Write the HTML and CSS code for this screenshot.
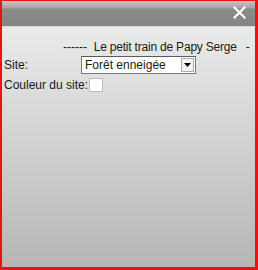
FILE: index.html
```html
<!DOCTYPE html>
<html>
<head>
<meta charset="utf-8">
<link rel="stylesheet" href="styles.css">
</head>
<body>
<div class="win">
  <div class="head">
    <svg class="close" width="13" height="13" viewBox="0 0 13 13"><path d="M1.5 1.5 L11.5 11.5 M11.5 1.5 L1.5 11.5" stroke="#fff" stroke-width="2.2" stroke-linecap="square"/></svg>
  </div>
  <div class="body">
    <div class="title">------&nbsp; <span class="main">Le petit train de Papy Serge</span><span class="tail">-</span></div>
    <div class="row site">
      <span class="lbl">Site:</span>
      <div class="select"><span>Forêt enneigée</span><span class="arrow"><svg width="7" height="4" viewBox="0 0 7 4"><path d="M0 0H7L3.5 4Z" fill="#000"/></svg></span></div>
    </div>
    <div class="row color">
      <span class="lbl">Couleur du site:</span><span class="swatch"></span>
    </div>
  </div>
</div>
</body>
</html>
```
FILE: styles.css
```css
html, body { margin: 0; padding: 0; }
body { width: 258px; height: 270px; overflow: hidden; font-family: "Liberation Sans", Arial, sans-serif; font-size: 12px; color: #1a1a1a; }
.win {
  box-sizing: border-box; width: 258px; height: 270px;
  border-style: solid; border-color: #f01010;
  border-width: 1px 3px 3px 2px;
  display: flex; flex-direction: column; overflow: hidden;
  background: linear-gradient(#f0f0f0, #b6b6b6);
}
.head {
  height: 25px; flex: none; position: relative;
  background: linear-gradient(#c4c4c4 0px, #a4a4a4 7px, #8a8a8a 8px, #858585 24px);
  border-bottom: 1px solid #d8d8d8;
}
.close { position: absolute; right: 9px; top: 5px; }
.body { flex: 1; padding: 12px 0 0 2px; }
.title { white-space: nowrap; padding-left: 59px; height: 16px; line-height: 16px; }
.main { letter-spacing: -0.2px; }
.tail { margin-left: 9px; }
.row { display: flex; align-items: center; }
.site { margin-top: 0; height: 20px; }
.site .lbl { width: 77px; align-self: flex-start; margin-top: 3px; }
.select {
  width: 115px; height: 18px; box-sizing: border-box;
  border: 1px solid #7a7a7a; border-top-color: #5a5a5a; background: #fff;
  display: flex; align-items: center; justify-content: space-between;
  padding-left: 3px; font-size: 12px;
}
.arrow {
  width: 13px; height: 14px; margin-right: 1px; box-sizing: border-box;
  border: 1px solid #aaa; background: #f4f4f4;
  display: flex; align-items: center; justify-content: center;
}
.color { margin-top: 3px; }
.swatch { width: 12px; height: 12px; background: #fff; border: 1px solid #bbb; margin-left: 1px; }
```
